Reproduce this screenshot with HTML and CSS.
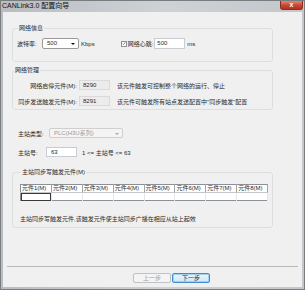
FILE: index.html
```html
<!DOCTYPE html>
<html lang="zh">
<head>
    <meta charset="UTF-8">
    <title>CANLink3.0 配置向导</title>
    <link rel="stylesheet" href="styles.css">
</head>
<body>
    <div class="window">
        <div class="titlebar">
            <span class="title">CANLink3.0 配置向导</span>
            <span class="close">x</span>
        </div>

        <div class="client">
            <fieldset class="group group-net">
                <legend>网络信息</legend>
                <div class="row">
                    <span class="label baud-label">波特率:</span>
                    <div class="select baud-select">500<span class="arrow"></span></div>
                    <span class="unit">Kbps</span>
                    <span class="checkbox">
                        <svg width="6" height="6" viewBox="0 0 6 6"><path d="M1 3.2 L2.4 4.6 L5 1.2" fill="none" stroke="#2a4f8f" stroke-width="1"/></svg>
                    </span>
                    <span class="label">网络心跳:</span>
                    <div class="input beat-input">500</div>
                    <span class="unit">ms</span>
                </div>
            </fieldset>

            <fieldset class="group group-manage">
                <legend>网络管理</legend>
                <div class="row">
                    <span class="label right-label">网络启停元件(M):</span>
                    <div class="input disabled short-input">8290</div>
                    <span class="desc">该元件触发可控制整个网络的运行、停止</span>
                </div>
                <div class="row">
                    <span class="label right-label">同步发送触发元件(M):</span>
                    <div class="input disabled short-input">8291</div>
                    <span class="desc">该元件可触发所有站点发送配置中"同步触发"配置</span>
                </div>
            </fieldset>

            <div class="row master-type">
                <span class="label">主站类型:</span>
                <div class="select disabled type-select">PLC(H3U系列)<span class="arrow"></span></div>
            </div>
            <div class="row master-no">
                <span class="label">主站号:</span>
                <div class="input no-input">63</div>
                <span class="hint">1 &lt;= 主站号 &lt;= 63</span>
            </div>

            <fieldset class="group group-sync">
                <legend>主站同步写触发元件(M)</legend>
                <table class="grid">
                    <tr>
                        <th>元件1(M)</th><th>元件2(M)</th><th>元件3(M)</th><th>元件4(M)</th>
                        <th>元件5(M)</th><th>元件6(M)</th><th>元件7(M)</th><th>元件8(M)</th>
                    </tr>
                    <tr>
                        <td class="current"></td><td></td><td></td><td></td>
                        <td></td><td></td><td></td><td></td>
                    </tr>
                </table>
                <div class="note">主站同步写触发元件,该触发元件使主站同步广播在相应从站上起效</div>
            </fieldset>

            <div class="separator"></div>

            <div class="buttons">
                <button class="btn" disabled>上一步</button>
                <button class="btn primary">下一步</button>
            </div>
        </div>
    </div>
</body>
</html>
```

FILE: styles.css
```css
body {
    margin: 0;
    font-family: "Liberation Sans", "Noto Sans CJK SC", sans-serif;
    font-size: 6px;
    color: #2a2a2a;
    background: #ffffff;
}

.window {
    width: 305px;
    height: 290px;
    box-sizing: border-box;
    background: linear-gradient(to right, #b9bdc2 0%, #cfd2d5 55%, #c3c6ca 100%);
    border: 1px solid #7a7d80;
    display: flex;
    flex-direction: column;
}

.titlebar {
    height: 11px;
    display: flex;
    align-items: flex-start;
}

.title {
    font-size: 7px;
    line-height: 10px;
    margin-left: 1px;
    color: #111;
}

.close {
    margin-left: auto;
    margin-right: 1px;
    width: 23px;
    height: 9px;
    line-height: 8px;
    text-align: center;
    color: #fff;
    font-weight: bold;
    font-size: 7px;
    background: linear-gradient(#e08a78, #c8452f 55%, #b8321f);
    border: 1px solid #8c2f22;
    border-top: none;
    border-radius: 0 0 3px 3px;
    box-sizing: border-box;
}

.client {
    flex: 1;
    margin: 0 2px 2px 2px;
    background: #f0f0f0;
    padding: 12px 0 0 9px;
    display: flex;
    flex-direction: column;
}

.group {
    width: 261px;
    box-sizing: border-box;
    margin: 0;
    padding: 6px 4px 0 4px;
    border: 1px solid #dcdfe2;
    border-radius: 3px;
}

.group legend {
    padding: 0 1px;
    margin-left: 1px;
    line-height: 8px;
}

.group-net {
    height: 38px;
}

.group-manage {
    height: 44px;
    margin-top: 4px;
    padding-left: 0;
}

.group-sync {
    height: 60px;
    margin-top: 11px;
    padding: 8px 4px 0 7px;
}

.row {
    display: flex;
    align-items: center;
}

.group-manage .row + .row {
    margin-top: 6px;
}

.label {
    white-space: nowrap;
}

.baud-label {
    width: 25px;
}

.right-label {
    width: 64px;
    text-align: right;
    margin-right: 2px;
}

.select {
    position: relative;
    height: 11px;
    box-sizing: border-box;
    line-height: 9px;
    padding-left: 4px;
    background: #fff;
    border: 1px solid #9a9a9a;
    border-radius: 2px;
}

.select .arrow {
    position: absolute;
    right: 3px;
    top: 4px;
    border-left: 2px solid transparent;
    border-right: 2px solid transparent;
    border-top: 2px solid #111;
}

.select.disabled {
    color: #9a9a9a;
    background: #f4f4f4;
    border-color: #cfcfcf;
}

.select.disabled .arrow {
    border-top-color: #a8a8a8;
}

.baud-select {
    width: 37px;
}

.unit {
    margin-left: 2px;
}

.checkbox {
    width: 6px;
    height: 6px;
    margin-left: 26px;
    margin-right: 1px;
    box-sizing: border-box;
    border: 1px solid #8f8f8f;
    background: #fff;
    display: flex;
    align-items: center;
    justify-content: center;
}

.checkbox svg {
    display: block;
    width: 5px;
    height: 5px;
}

.input {
    height: 11px;
    box-sizing: border-box;
    line-height: 9px;
    padding-left: 2px;
    background: #fff;
    border: 1px solid #c9ccd0;
}

.input.disabled {
    height: 10px;
    line-height: 8px;
    background: #ececec;
    border-color: #dadada;
    padding-left: 3px;
}

.beat-input {
    width: 31px;
    margin-left: 1px;
}

.short-input {
    width: 31px;
}

.desc {
    margin-left: 7px;
    white-space: nowrap;
}

.master-type {
    margin-top: 18px;
    padding-left: 6px;
}

.master-type .label {
    width: 31px;
}

.type-select {
    width: 74px;
    height: 10px;
    line-height: 8px;
}

.master-no {
    margin-top: 9px;
    padding-left: 6px;
}

.master-no .label {
    width: 28px;
}

.no-input {
    width: 31px;
    height: 10px;
    line-height: 8px;
    padding-left: 4px;
}

.hint {
    margin-left: 5px;
}

.grid {
    width: 248px;
    border-collapse: collapse;
    table-layout: fixed;
    background: #fff;
    border: 1px solid #8c9096;
}

.grid th {
    height: 7px;
    padding: 0 0 0 1px;
    font-weight: normal;
    text-align: left;
    line-height: 7px;
    white-space: nowrap;
    overflow: hidden;
    border-right: 1px solid #a0a4a8;
    border-bottom: 1px solid #c4c7ca;
}

.grid td {
    height: 7px;
    padding: 0;
    border-right: 1px solid #e6e6e6;
}

.grid td.current {
    outline: 1px solid #3a3a3a;
    outline-offset: -1px;
}

.note {
    margin-top: 13px;
    white-space: nowrap;
}

.separator {
    margin: 38px 4px 0 -5px;
    height: 1px;
    background: #b9b9b9;
}

.buttons {
    display: flex;
    gap: 1px;
    margin-top: 6px;
    padding-left: 121px;
}

.btn {
    width: 38px;
    height: 10px;
    padding: 0;
    font-family: inherit;
    font-size: 6px;
    line-height: 8px;
    border: 1px solid #a8a8a8;
    border-radius: 2px;
    background: linear-gradient(#f6f6f6, #e2e2e2);
    color: #1e1e1e;
}

.btn:disabled {
    color: #a0a0a0;
    border-color: #c2c2c2;
    background: #f4f4f4;
}

.btn.primary {
    border-color: #3c8fd0;
    background: linear-gradient(#eaf5fc, #cfe6f7);
    box-shadow: inset 0 0 0 1px #9ed2f2;
}
```
